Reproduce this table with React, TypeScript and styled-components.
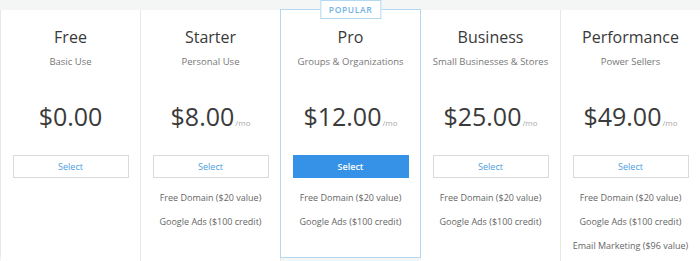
import styled, { createGlobalStyle } from "styled-components";

type Plan = {
  name: string
  tagline: string
  price: string
  monthly: boolean
  popular?: boolean
  features: string[]
}

const plans: Plan[] = [
  { name: 'Free', tagline: 'Basic Use', price: '$0.00', monthly: false, features: [] },
  { name: 'Starter', tagline: 'Personal Use', price: '$8.00', monthly: true, features: ['Free Domain ($20 value)', 'Google Ads ($100 credit)'] },
  { name: 'Pro', tagline: 'Groups & Organizations', price: '$12.00', monthly: true, popular: true, features: ['Free Domain ($20 value)', 'Google Ads ($100 credit)'] },
  { name: 'Business', tagline: 'Small Businesses & Stores', price: '$25.00', monthly: true, features: ['Free Domain ($20 value)', 'Google Ads ($100 credit)'] },
  { name: 'Performance', tagline: 'Power Sellers', price: '$49.00', monthly: true, features: ['Free Domain ($20 value)', 'Google Ads ($100 credit)', 'Email Marketing ($96 value)'] },
]

export default function App() {
  return (
    <>
      <GlobalStyle />
      <PricingSection>
        <PlanGrid>
          {plans.map(plan => (
            <PlanColumn key={plan.name} $popular={!!plan.popular}>
              {plan.popular && <Badge>POPULAR</Badge>}
              <PlanName>{plan.name}</PlanName>
              <Tagline>{plan.tagline}</Tagline>
              <Price>
                {plan.price}
                {plan.monthly && <Per>/mo</Per>}
              </Price>
              <SelectButton type="button" $primary={!!plan.popular}>Select</SelectButton>
              <FeatureList>
                {plan.features.map(f => <li key={f}>{f}</li>)}
              </FeatureList>
            </PlanColumn>
          ))}
        </PlanGrid>
      </PricingSection>
    </>
  )
}

const GlobalStyle = createGlobalStyle`
  html, body {
    margin: 0;
    padding: 0;
    background: #f4f5f5;
    font-family: "Open Sans", "Noto Sans", sans-serif;
  }
`

const PricingSection = styled.section`
  width: 700px;
  height: 261px;
  padding-top: 10px;
  box-sizing: border-box;
  overflow: hidden;
`

const PlanGrid = styled.div`
  display: grid;
  grid-template-columns: repeat(5, 140px);
  height: 247px;
  border-left: 1px solid #e6e7e8;
  box-sizing: border-box;
`

const PlanColumn = styled.div<{ $popular: boolean }>`
  position: relative;
  display: flex;
  flex-direction: column;
  align-items: center;
  background: #fff;
  padding-top: 17px;
  box-sizing: border-box;
  border-right: 1px solid #e6e7e8;
  ${p => p.$popular && `
    border: 1px solid #b3d8f0;
    margin-left: -1px;
    margin-top: -1px;
    height: 249px;
    z-index: 1;
  `}
`

const Badge = styled.span`
  position: absolute;
  top: -10px;
  left: 50%;
  transform: translateX(-50%);
  background: #fff;
  border: 1px solid #b3d8f0;
  color: #6fb3e6;
  font-size: 8.5px;
  font-weight: 600;
  letter-spacing: 0.6px;
  line-height: 17px;
  padding: 0 8px;
`

const PlanName = styled.h2`
  margin: 0;
  font-size: 16px;
  font-weight: 400;
  line-height: 20px;
  color: #3a3a3a;
`

const Tagline = styled.p`
  margin: 9px 0 0;
  font-size: 9.5px;
  line-height: 12px;
  color: #777;
`

const Price = styled.div`
  margin-top: 33px;
  height: 30px;
  font-size: 25px;
  line-height: 30px;
  color: #3a3a3a;
`

const Per = styled.span`
  font-size: 8px;
  line-height: 1;
  color: #aaa;
  margin-left: 1px;
`

const SelectButton = styled.button<{ $primary: boolean }>`
  margin-top: 24px;
  width: 116px;
  height: 23px;
  font-family: inherit;
  font-size: 9px;
  cursor: pointer;
  border: 1px solid ${p => p.$primary ? '#3592e6' : '#d9dadb'};
  background: ${p => p.$primary ? '#3592e6' : '#fff'};
  color: ${p => p.$primary ? '#fff' : '#4a9de0'};
  font-weight: ${p => p.$primary ? 600 : 400};
`

const FeatureList = styled.ul`
  list-style: none;
  margin: 14px 0 0;
  padding: 0;
  text-align: center;
  li{
    font-size: 9px;
    line-height: 12px;
    color: #666;
    margin-bottom: 12px;
  }
`
